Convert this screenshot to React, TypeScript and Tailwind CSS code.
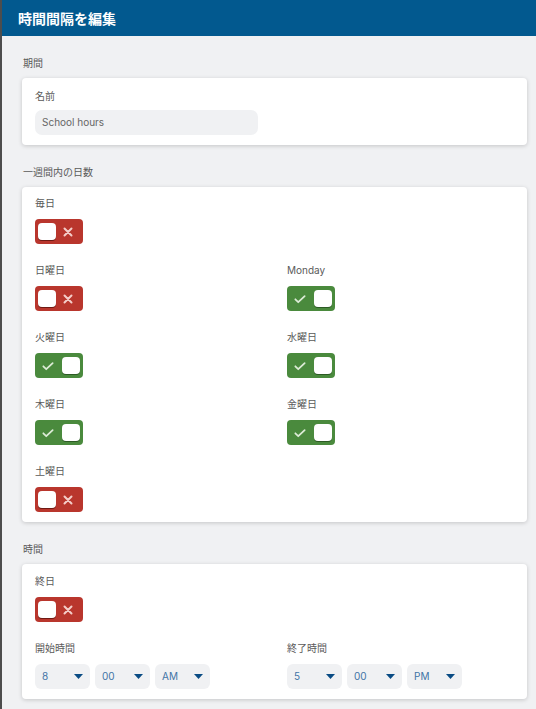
import React from "react";

const font = { fontFamily: '"Inter", "Noto Sans CJK JP", sans-serif' };

const Toggle = ({ on }: { on: boolean }) => (
    <div
        className={`flex h-[25px] w-[48px] items-center justify-between rounded-[4px] px-[3px] ${
            on ? "bg-[#4a8a3d]" : "bg-[#b9362d]"
        }`}
    >
        {on ? (
            <>
                <svg width="14" height="14" viewBox="0 0 24 24" className="ml-[3px]">
                    <path
                        d="M4 12.5l5 5L20 7"
                        fill="none"
                        stroke="#dcebd6"
                        strokeWidth="3"
                        strokeLinecap="round"
                        strokeLinejoin="round"
                    />
                </svg>
                <div className="h-[17px] w-[18px] rounded-[4px] bg-white shadow-[0_1px_0_#2d5a25]" />
            </>
        ) : (
            <>
                <div className="h-[17px] w-[18px] rounded-[4px] bg-white shadow-[0_1px_0_#6e1a14]" />
                <svg width="12" height="12" viewBox="0 0 24 24" className="mr-[6px]">
                    <path
                        d="M5 5l14 14M19 5L5 19"
                        fill="none"
                        stroke="#f4cdc9"
                        strokeWidth="4"
                        strokeLinecap="round"
                    />
                </svg>
            </>
        )}
    </div>
);

const Label = ({ children }: { children: React.ReactNode }) => (
    <div className="h-[14px] text-[10px] leading-[14px] text-[#5a5a5a]">{children}</div>
);

const ToggleField = ({ label, on }: { label: string; on: boolean }) => (
    <div className="flex flex-col gap-[9px]">
        <Label>{label}</Label>
        <Toggle on={on} />
    </div>
);

const Select = ({ value }: { value: string }) => (
    <div className="flex h-[25px] w-[55px] items-center justify-between rounded-[6px] bg-[#f0f1f3] pl-[7px] pr-[7px]">
        <span className="text-[10px] text-[#3f74a6]">{value}</span>
        <svg width="9" height="5" viewBox="0 0 9 5">
            <path d="M0 0h9L4.5 5z" fill="#0a4c84" />
        </svg>
    </div>
);

const Card = ({ children, className }: { children: React.ReactNode; className?: string }) => (
    <div
        className={`rounded-[4px] bg-white px-[13px] shadow-[0_1px_4px_rgba(0,0,0,0.18)] ${className ?? ""}`}
    >
        {children}
    </div>
);

const SectionLabel = ({ children }: { children: React.ReactNode }) => (
    <div className="mb-[8px] ml-[1px] h-[14px] text-[10px] leading-[14px] text-[#5a5a5a]">
        {children}
    </div>
);

export default function App() {
    return (
        <div className="flex h-[709px] w-[536px] overflow-hidden bg-[#f0f1f3]" style={font}>
            <div className="w-[2px] shrink-0 bg-[#4d4d4d]" />
            <div className="flex flex-1 flex-col">
                <div className="flex h-[36px] items-center bg-[#02598f] pl-[16px]">
                    <h1 className="text-[14px] font-bold text-white">時間間隔を編集</h1>
                </div>
                <div className="flex flex-col pl-[20px] pr-[9px] pt-[20px]">
                    <SectionLabel>期間</SectionLabel>
                    <Card className="pt-[11px] pb-[10px]">
                        <Label>名前</Label>
                        <div className="mt-[7px] flex h-[25px] w-[223px] items-center rounded-[7px] bg-[#f0f1f3] px-[7px] text-[10px] text-[#666]">
                            School hours
                        </div>
                    </Card>

                    <div className="mt-[20px]" />
                    <SectionLabel>一週間内の日数</SectionLabel>
                    <Card className="pt-[9px] pb-[10px]">
                        <div className="grid grid-cols-[252px_1fr] gap-y-[19px]">
                            <ToggleField label="毎日" on={false} />
                            <div />
                            <ToggleField label="日曜日" on={false} />
                            <ToggleField label="Monday" on={true} />
                            <ToggleField label="火曜日" on={true} />
                            <ToggleField label="水曜日" on={true} />
                            <ToggleField label="木曜日" on={true} />
                            <ToggleField label="金曜日" on={true} />
                            <ToggleField label="土曜日" on={false} />
                        </div>
                    </Card>

                    <div className="mt-[20px]" />
                    <SectionLabel>時間</SectionLabel>
                    <Card className="pt-[10px] pb-[10px]">
                        <div className="grid grid-cols-[252px_1fr] gap-y-[19px]">
                            <ToggleField label="終日" on={false} />
                            <div />
                            <div className="flex flex-col gap-[9px]">
                                <Label>開始時間</Label>
                                <div className="flex gap-[5px]">
                                    <Select value="8" />
                                    <Select value="00" />
                                    <Select value="AM" />
                                </div>
                            </div>
                            <div className="flex flex-col gap-[9px]">
                                <Label>終了時間</Label>
                                <div className="flex gap-[5px]">
                                    <Select value="5" />
                                    <Select value="00" />
                                    <Select value="PM" />
                                </div>
                            </div>
                        </div>
                    </Card>
                </div>
            </div>
        </div>
    );
}
